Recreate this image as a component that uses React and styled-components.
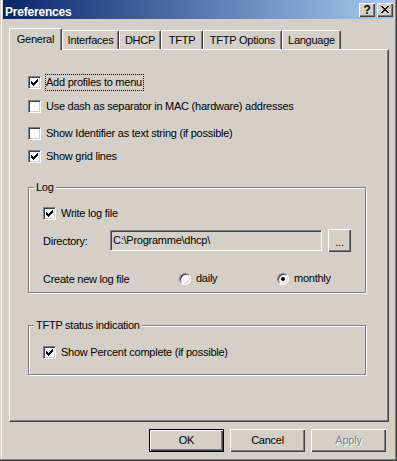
import React from 'react'
import styled, { createGlobalStyle } from 'styled-components'

const GlobalStyle = createGlobalStyle`
  html, body {
    margin: 0;
    padding: 0;
    background: #d4d0c8;
  }
  body {
    font-family: "Liberation Sans", Arial, sans-serif;
    font-size: 11px;
    letter-spacing: -0.25px;
    color: #000;
  }
  * {
    box-sizing: border-box;
  }
`;

const Window = styled.div`
  width: 397px;
  height: 461px;
  padding: 0 3px 3px 3px;
  display: flex;
  flex-direction: column;
  background: #d4d0c8;
  box-shadow: inset -1px -1px #404040, inset -2px -2px #808080,
    inset 1px 0 #d4d0c8, inset 2px 0 #fff;
`;

const TitleBar = styled.div`
  height: 19px;
  flex-shrink: 0;
  display: flex;
  align-items: flex-start;
  padding: 0 1px 0 2px;
  background: linear-gradient(to right, #0a246a, #a6caf0);
`;

const Title = styled.div`
  margin-top: 5px;
  font-size: 12px;
  line-height: 14px;
  font-weight: bold;
  letter-spacing: -0.2px;
  color: #fff;
`;

const CaptionButtons = styled.div`
  margin-left: auto;
  margin-top: 3px;
  display: flex;
  gap: 2px;
`;

const CaptionButton = styled.div`
  width: 16px;
  height: 14px;
  display: flex;
  align-items: center;
  justify-content: center;
  background: #d4d0c8;
  box-shadow: inset 1px 1px #fff, inset -1px -1px #404040, inset -2px -2px #808080;
  font-size: 12px;
  font-weight: bold;
  line-height: 12px;
  padding-bottom: 1px;
`;

const Content = styled.div`
  flex: 1;
  display: flex;
  flex-direction: column;
  padding: 9px 5px 0 6px;
`;

const TabRow = styled.div`
  height: 21px;
  display: flex;
  align-items: flex-end;
  position: relative;
  z-index: 1;
`;

const Tab = styled.div`
  width: ${({ $w }) => $w}px;
  height: ${({ $active }) => ($active ? 22 : 19)}px;
  margin-bottom: ${({ $active }) => ($active ? -1 : 0)}px;
  display: flex;
  align-items: center;
  justify-content: center;
  padding-bottom: ${({ $active }) => ($active ? 2 : 0)}px;
  background: #d4d0c8;
  border-left: 1px solid #fff;
  border-top: 1px solid #fff;
  border-right: 1px solid #404040;
  border-radius: 2px 2px 0 0;
  box-shadow: inset -1px 0 #808080;
  white-space: nowrap;
`;

const Panel = styled.div`
  height: 373px;
  display: flex;
  flex-direction: column;
  padding: 26px 22px 0 18px;
  border: 1px solid;
  border-color: #fff #404040 #404040 #fff;
  box-shadow: inset -1px -1px #808080;
`;

const Row = styled.div`
  height: ${({ $h }) => $h || 13}px;
  margin-top: ${({ $mt }) => $mt || 0}px;
  display: flex;
  align-items: center;
  flex-shrink: 0;
`;

const CheckBox = styled.span`
  width: 13px;
  height: 13px;
  flex-shrink: 0;
  display: flex;
  align-items: center;
  justify-content: center;
  background: #fff;
  border: 1px solid;
  border-color: #808080 #fff #fff #808080;
  box-shadow: inset 1px 1px #404040, inset -1px -1px #d4d0c8;
`;

const Label = styled.span`
  margin-left: 5px;
  line-height: 15px;
  padding: 0 1px 0 0;
  white-space: nowrap;
  outline: ${({ $focus }) => ($focus ? '1px dotted #000' : 'none')};
`;

const Group = styled.div`
  margin-top: ${({ $mt }) => $mt}px;
  padding: 0 14px ${({ $pb }) => $pb}px 14px;
  display: flex;
  flex-direction: column;
  border: 1px solid #808080;
  box-shadow: inset 1px 1px #fff, 1px 1px #fff;
`;

const GroupTitle = styled.div`
  align-self: flex-start;
  height: 13px;
  margin: -7px 0 0 -9px;
  padding: 0 2px;
  line-height: 13px;
  background: #d4d0c8;
  white-space: nowrap;
`;

const FieldLabel = styled.span`
  width: ${({ $w }) => $w}px;
  flex-shrink: 0;
  white-space: nowrap;
`;

const TextBox = styled.div`
  flex: 1;
  height: 21px;
  display: flex;
  align-items: center;
  padding: 0 0 1px 2px;
  background: #d4d0c8;
  border: 1px solid;
  border-color: #808080 #fff #fff #808080;
  box-shadow: inset 1px 1px #404040, inset -1px -1px #d4d0c8;
  white-space: nowrap;
`;

const BrowseButton = styled.div`
  width: 23px;
  height: 23px;
  margin-left: 6px;
  display: flex;
  align-items: center;
  justify-content: center;
  padding-top: 3px;
  background: #d4d0c8;
  box-shadow: inset 1px 1px #fff, inset -1px -1px #404040, inset -2px -2px #808080;
`;

const RadioGrid = styled.div`
  height: 12px;
  margin-top: 20px;
  display: grid;
  grid-template-columns: 136px 98px auto;
  align-items: center;
`;

const RadioOption = styled.div`
  display: flex;
  align-items: center;
`;

const Radio = styled.span`
  width: 12px;
  height: 12px;
  flex-shrink: 0;
  display: flex;
  align-items: center;
  justify-content: center;
  border-radius: 50%;
  background: #fff;
  border: 1px solid;
  border-color: #808080 #fff #fff #808080;
  box-shadow: inset 1px 1px #404040, inset -1px -1px #d4d0c8;

  &::after {
    content: '';
    width: 4px;
    height: 4px;
    border-radius: 50%;
    background: ${({ $checked }) => ($checked ? '#000' : 'transparent')};
  }
`;

const RadioText = styled.span`
  margin-left: 5px;
  line-height: 13px;
`;

const ButtonRow = styled.div`
  margin-top: 7px;
  padding-right: 3px;
  display: flex;
  justify-content: flex-end;
  gap: 6px;
`;

const Button = styled.button`
  width: 75px;
  height: 23px;
  padding: 0 0 1px 0;
  font-family: "Liberation Sans", Arial, sans-serif;
  font-size: 11px;
  letter-spacing: -0.25px;
  background: #d4d0c8;
  border: ${({ $default }) => ($default ? '1px solid #000' : 'none')};
  box-shadow: inset 1px 1px #fff, inset -1px -1px #404040, inset -2px -2px #808080;
  color: ${({ disabled }) => (disabled ? '#808080' : '#000')};
  text-shadow: ${({ disabled }) => (disabled ? '1px 1px #fff' : 'none')};
`;

const checkYs = [2, 3, 4, 3, 2, 1, 0];

const CheckMark = () => (
  <svg width="7" height="7" viewBox="0 0 7 7" shapeRendering="crispEdges">
    <path d={checkYs.map((y, i) => `M${i} ${y}h1v3h-1z`).join('')} fill="#000" />
  </svg>
);

const closeRows = [[0, 2, 6, 2], [1, 2, 5, 2], [2, 4], [3, 2], [2, 4], [1, 2, 5, 2], [0, 2, 6, 2]];

const CloseGlyph = () => (
  <svg width="8" height="7" viewBox="0 0 8 7" shapeRendering="crispEdges">
    <path
      fill="#000"
      d={closeRows
        .map((r, y) => {
          let d = `M${r[0]} ${y}h${r[1]}v1h-${r[1]}z`;
          if (r.length > 2) d += `M${r[2]} ${y}h${r[3]}v1h-${r[3]}z`;
          return d;
        })
        .join('')}
    />
  </svg>
);

const Check = ({ checked, label, focus, mt }) => (
  <Row $mt={mt}>
    <CheckBox>{checked && <CheckMark />}</CheckBox>
    <Label $focus={focus}>{label}</Label>
  </Row>
);

const tabs = [
  { name: 'General', w: 53, active: true },
  { name: 'Interfaces', w: 57 },
  { name: 'DHCP', w: 42 },
  { name: 'TFTP', w: 42 },
  { name: 'TFTP Options', w: 79 },
  { name: 'Language', w: 59 },
];

export default function App() {
  return (
    <>
      <GlobalStyle />
      <Window>
        <TitleBar>
          <Title>Preferences</Title>
          <CaptionButtons>
            <CaptionButton>?</CaptionButton>
            <CaptionButton><CloseGlyph /></CaptionButton>
          </CaptionButtons>
        </TitleBar>
        <Content>
          <TabRow>
            {tabs.map((t) => (
              <Tab key={t.name} $w={t.w} $active={t.active}>{t.name}</Tab>
            ))}
          </TabRow>
          <Panel>
            <Check checked focus label="Add profiles to menu" />
            <Check mt={11} label="Use dash as separator in MAC (hardware) addresses" />
            <Check mt={14} label="Show Identifier as text string (if possible)" />
            <Check mt={10} checked label="Show grid lines" />

            <Group $mt={24} $pb={8}>
              <GroupTitle>Log</GroupTitle>
              <Check mt={13} checked label="Write log file" />
              <Row $h={23} $mt={9}>
                <FieldLabel $w={67}>Directory:</FieldLabel>
                <TextBox>C:\Programme\dhcp\</TextBox>
                <BrowseButton>...</BrowseButton>
              </Row>
              <RadioGrid>
                <FieldLabel $w={136}>Create new log file</FieldLabel>
                <RadioOption>
                  <Radio />
                  <RadioText>daily</RadioText>
                </RadioOption>
                <RadioOption>
                  <Radio $checked />
                  <RadioText>monthly</RadioText>
                </RadioOption>
              </RadioGrid>
            </Group>

            <Group $mt={32} $pb={15}>
              <GroupTitle>TFTP status indication</GroupTitle>
              <Check mt={14} checked label="Show Percent complete (if possible)" />
            </Group>
          </Panel>
          <ButtonRow>
            <Button $default>OK</Button>
            <Button>Cancel</Button>
            <Button disabled>Apply</Button>
          </ButtonRow>
        </Content>
      </Window>
    </>
  );
}
